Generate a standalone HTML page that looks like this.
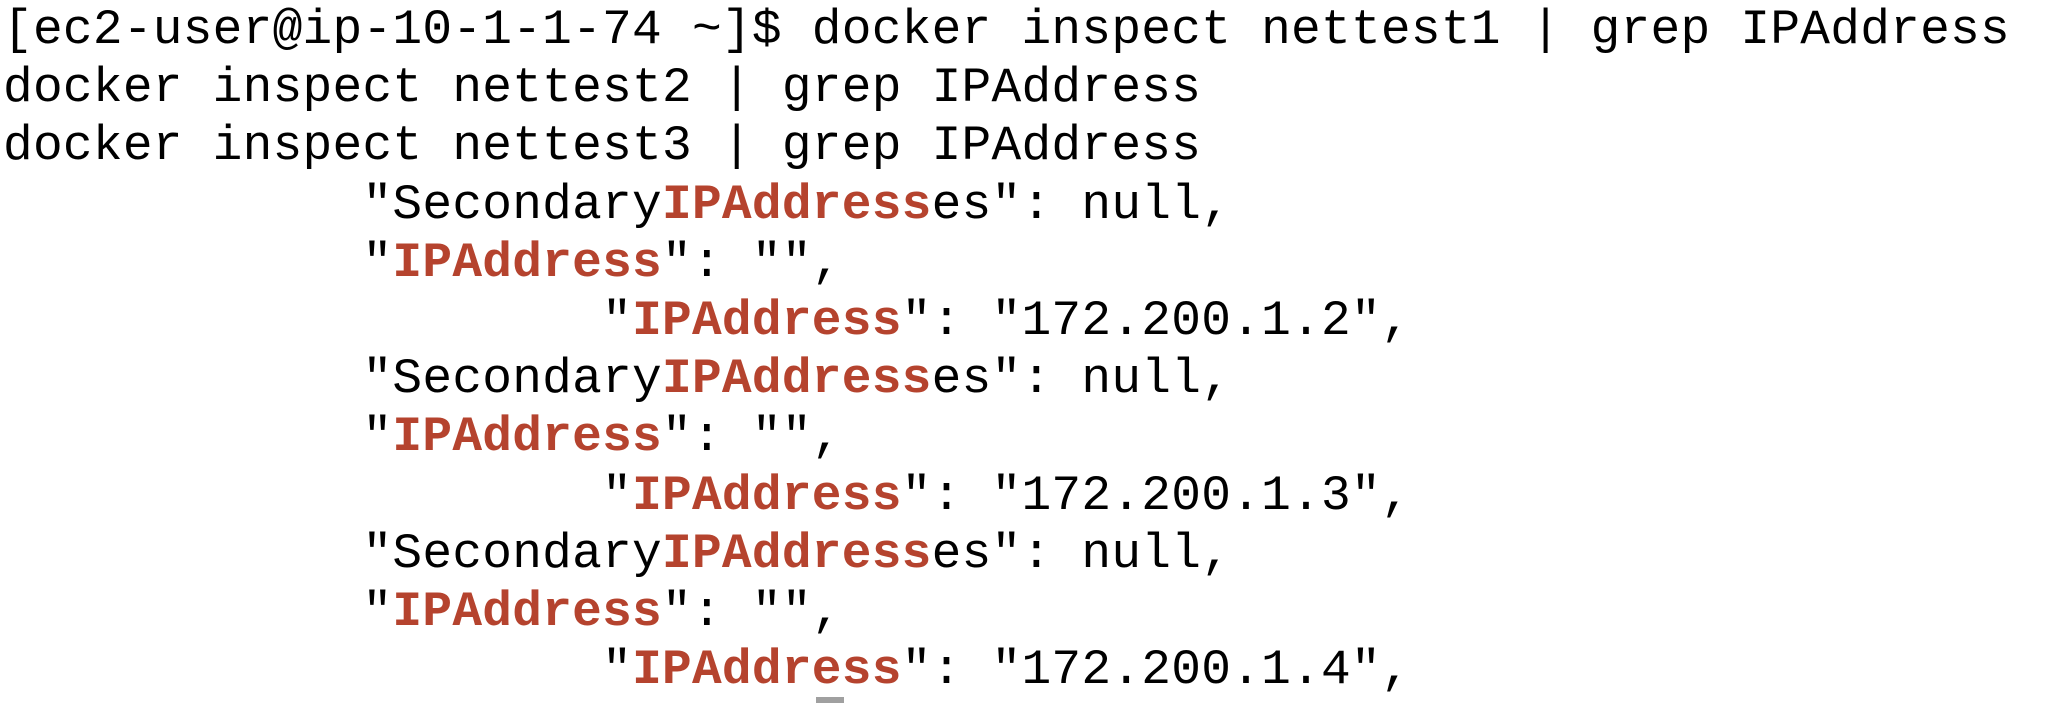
<!DOCTYPE html>
<html><head><meta charset="utf-8"><style>
html,body{margin:0;padding:0;background:#fff;width:2066px;height:702px;overflow:hidden}
pre{margin:0;position:absolute;left:3px;top:1px;font-family:"Liberation Mono",monospace;font-size:49.5px;letter-spacing:0.25px;line-height:58.2px;color:#000}
b{color:#b5432e}
.cur{position:absolute;left:816px;top:697px;width:28px;height:6px;background:#a0a0a0}
</style></head><body>
<pre>[ec2-user@ip-10-1-1-74 ~]$ docker inspect nettest1 | grep IPAddress
docker inspect nettest2 | grep IPAddress
docker inspect nettest3 | grep IPAddress
            "Secondary<b>IPAddress</b>es": null,
            "<b>IPAddress</b>": "",
                    "<b>IPAddress</b>": "172.200.1.2",
            "Secondary<b>IPAddress</b>es": null,
            "<b>IPAddress</b>": "",
                    "<b>IPAddress</b>": "172.200.1.3",
            "Secondary<b>IPAddress</b>es": null,
            "<b>IPAddress</b>": "",
                    "<b>IPAddress</b>": "172.200.1.4",</pre>
<div class="cur"></div>
</body></html>
